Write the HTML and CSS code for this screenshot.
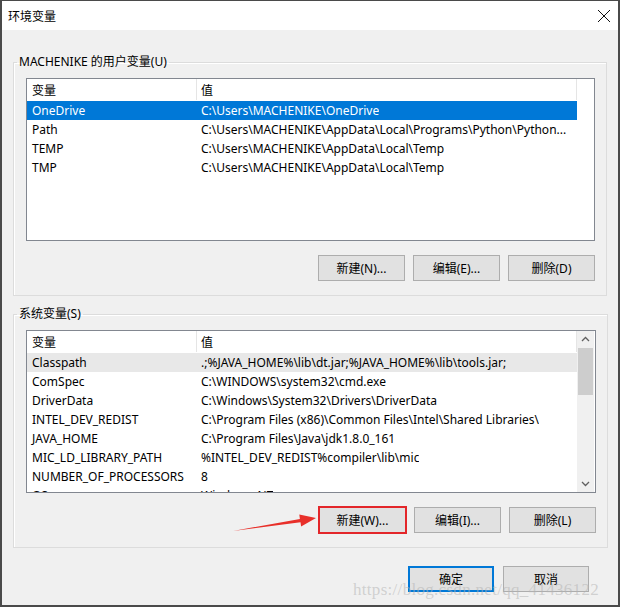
FILE: index.html
```html
<!DOCTYPE html>
<html lang="zh-CN">
  <head>
    <meta charset="UTF-8">
    <title>环境变量</title>
    <link rel="stylesheet" href="styles.css">
  </head>
  <body>
    <div class="window">
      <div class="titlebar">
        <span class="title">环境变量</span>
        <svg class="close" width="14" height="14" viewBox="0 0 14 14">
          <path d="M1 1L13 13M13 1L1 13" stroke="#111" stroke-width="1" fill="none"/>
        </svg>
      </div>

      <div class="dialog-body">
        <fieldset class="group">
          <legend>MACHENIKE 的用户变量(U)</legend>
          <div class="list">
            <div class="list-rows">
              <div class="row head"><span class="c1">变量</span><span class="c2">值</span></div>
              <div class="row selected"><span class="c1">OneDrive</span><span class="c2">C:\Users\MACHENIKE\OneDrive</span></div>
              <div class="row"><span class="c1">Path</span><span class="c2">C:\Users\MACHENIKE\AppData\Local\Programs\Python\Python...</span></div>
              <div class="row"><span class="c1">TEMP</span><span class="c2">C:\Users\MACHENIKE\AppData\Local\Temp</span></div>
              <div class="row"><span class="c1">TMP</span><span class="c2">C:\Users\MACHENIKE\AppData\Local\Temp</span></div>
            </div>
            <div class="list-side"></div>
          </div>
          <div class="buttons">
            <button class="btn">新建(N)...</button>
            <button class="btn">编辑(E)...</button>
            <button class="btn">删除(D)</button>
          </div>
        </fieldset>

        <fieldset class="group">
          <legend>系统变量(S)</legend>
          <div class="list">
            <div class="list-rows">
              <div class="row head"><span class="c1">变量</span><span class="c2">值</span></div>
              <div class="row hover"><span class="c1">Classpath</span><span class="c2">.;%JAVA_HOME%\lib\dt.jar;%JAVA_HOME%\lib\tools.jar;</span></div>
              <div class="row"><span class="c1">ComSpec</span><span class="c2">C:\WINDOWS\system32\cmd.exe</span></div>
              <div class="row"><span class="c1">DriverData</span><span class="c2">C:\Windows\System32\Drivers\DriverData</span></div>
              <div class="row"><span class="c1">INTEL_DEV_REDIST</span><span class="c2">C:\Program Files (x86)\Common Files\Intel\Shared Libraries\</span></div>
              <div class="row"><span class="c1">JAVA_HOME</span><span class="c2">C:\Program Files\Java\jdk1.8.0_161</span></div>
              <div class="row"><span class="c1">MIC_LD_LIBRARY_PATH</span><span class="c2">%INTEL_DEV_REDIST%compiler\lib\mic</span></div>
              <div class="row"><span class="c1">NUMBER_OF_PROCESSORS</span><span class="c2">8</span></div>
              <div class="row"><span class="c1">OS</span><span class="c2">Windows_NT</span></div>
            </div>
            <div class="list-side scrollbar">
              <svg class="sb-arrow" width="17" height="17" viewBox="0 0 17 17">
                <path d="M5 10L8.5 6.5L12 10" stroke="#606060" stroke-width="1.3" fill="none"/>
              </svg>
              <div class="sb-track"><div class="sb-thumb"></div></div>
              <svg class="sb-arrow" width="17" height="17" viewBox="0 0 17 17">
                <path d="M5 7L8.5 10.5L12 7" stroke="#606060" stroke-width="1.3" fill="none"/>
              </svg>
            </div>
          </div>
          <div class="buttons">
            <button class="btn marked">新建(W)...</button>
            <button class="btn">编辑(I)...</button>
            <button class="btn">删除(L)</button>
          </div>
        </fieldset>

        <div class="footer">
          <button class="btn wide default">确定</button>
          <button class="btn wide">取消</button>
        </div>
      </div>

      <!-- annotation drawn over the screenshot -->
      <svg class="annotation" width="620" height="607" viewBox="0 0 620 607">
        <polygon points="233,531 299.9,519 299.3,514.6 316,518 301.1,526.4 300.5,522.3" fill="#e8302a"/>
      </svg>
      <div class="watermark">https://blog.csdn.net/qq_41436122</div>
    </div>
  </body>
</html>
```

FILE: styles.css
```css
:root {
  --bg-dialog: #f0f0f0;
  --border-frame: #4a4a4a;
  --border-group: #dcdcdc;
  --border-list: #828790;
  --btn-bg: #e1e1e1;
  --btn-border: #adadad;
  --select: #0078d7;
  --hover: #e8e8e8;
  --row-height: 19px;
}

* {
  box-sizing: border-box;
}

body {
  margin: 0;
  font-family: "Noto Sans", "Noto Sans CJK SC", sans-serif;
  font-size: 12px;
  color: #000;
  background: #fff;
}

.window {
  position: relative;
  width: 620px;
  height: 607px;
  background: var(--bg-dialog);
  border: 1px solid var(--border-frame);
  border-left-width: 2px;
  border-right-width: 2px;
  border-bottom-width: 2px;
  overflow: hidden;
}

.titlebar {
  display: flex;
  align-items: center;
  justify-content: space-between;
  height: 29px;
  padding: 0 7px 0 6px;
  background: #fff;
}

.title {
  font-size: 12px;
}

.dialog-body {
  padding: 0 11px 0 11px;
}

/* group boxes */
.group {
  margin: 24px 0 0;
  padding: 8px 11px 14px 12px;
  border: 1px solid var(--border-group);
  box-shadow: inset 1px 1px 0 #fff;
}

.group + .group {
  margin-top: 10px;
}

.group legend {
  padding: 0 2px;
  margin-left: -9px;
  line-height: 16px;
}

/* list view */
.list {
  display: flex;
  height: 163px;
  background: #fff;
  border: 1px solid var(--border-list);
  overflow: hidden;
}

.list-rows {
  width: 550px;
  flex: none;
  overflow: hidden;
}

.list-side {
  flex: 1;
}

.row {
  display: flex;
  height: var(--row-height);
  align-items: center;
  white-space: nowrap;
}

.row.head {
  height: 21px;
  margin-bottom: 1px;
  border-right: 1px solid #e5e5e5;
}

.row.head .c1 {
  border-right: 1px solid #e5e5e5;
  height: 100%;
  display: flex;
  align-items: center;
}

.row.selected {
  background: var(--select);
  color: #fff;
}

.row.hover {
  background: var(--hover);
}

.c1 {
  width: 170px;
  flex: none;
  padding-left: 5px;
}

.c2 {
  padding-left: 4px;
  overflow: hidden;
}

/* scrollbar */
.scrollbar {
  display: flex;
  flex-direction: column;
  background: #f0f0f0;
  margin-right: 1px;
}

.sb-arrow {
  flex: none;
  display: block;
}

.sb-track {
  flex: 1;
}

.sb-thumb {
  height: 47px;
  margin: 0 1px;
  background: #cdcdcd;
}

/* buttons */
.buttons {
  display: flex;
  justify-content: flex-end;
  gap: 8px;
  margin-top: 14px;
}

.btn {
  width: 87px;
  height: 26px;
  padding: 0;
  font-family: inherit;
  font-size: 12px;
  color: #000;
  background: var(--btn-bg);
  border: 1px solid var(--btn-border);
}

.btn.marked {
  outline: 2px solid #e3262a;
  outline-offset: -1px;
}

.footer {
  display: flex;
  justify-content: flex-end;
  gap: 9px;
  margin-top: 18px;
  padding-right: 18px;
}

.btn.wide {
  width: 86px;
}

.btn.default {
  border: 2px solid var(--select);
}

/* overlays */
.annotation {
  position: absolute;
  left: -2px;
  top: -1px;
  pointer-events: none;
}

.watermark {
  position: absolute;
  left: 351px;
  top: 579px;
  font-family: "Liberation Serif", serif;
  font-size: 17px;
  letter-spacing: 0.3px;
  color: rgba(180, 180, 180, 0.55);
  pointer-events: none;
}
```
